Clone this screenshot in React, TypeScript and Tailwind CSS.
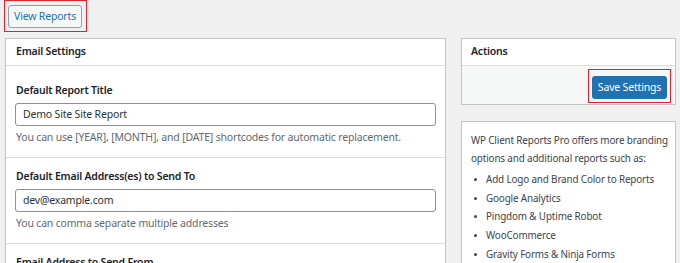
import React from 'react';

const font = { fontFamily: '"Noto Sans", "Open Sans", sans-serif' };

const Field: React.FC<{ label: string; value: string; help: string; first?: boolean }> = ({ label, value, help, first }) => (
    <div className={`px-[9px] pb-[12px] border-b border-[#dcdcde] ${first ? 'pt-[16px]' : 'pt-[10px]'}`}>
        <div className="h-[16px] leading-[16px] text-[10.5px] font-semibold tracking-[-0.2px] text-[#1d2327] pl-[1px]">{label}</div>
        <div className="mt-[5px] h-[23px] border border-[#8c8f94] rounded-[3px] bg-white flex items-center px-[7px] text-[10.5px] tracking-[-0.18px] text-[#2c3338]">
            {value}
        </div>
        <div className="mt-[3px] h-[16px] leading-[16px] text-[10.5px] tracking-[-0.18px] text-[#646970] pl-[1px] whitespace-nowrap">{help}</div>
    </div>
);

const features = [
    'Add Logo and Brand Color to Reports',
    'Google Analytics',
    'Pingdom & Uptime Robot',
    'WooCommerce',
    'Gravity Forms & Ninja Forms',
];

export default function App() {
    return (
        <div className="w-[680px] h-[263px] overflow-hidden bg-[#f0f0f1]" style={font}>
            <div className="pl-[4px]">
                <div className="inline-flex border border-[#e0242b] pl-[3px] pr-[4px] pt-[4px] pb-[3px]">
                    <button className="w-[74px] h-[23px] border border-[#7fa3c7] rounded-[3px] bg-[#f6f7f7] text-[10.5px] tracking-[-0.18px] text-[#2271b1]">
                        View Reports
                    </button>
                </div>
            </div>
            <div className="flex items-start pl-[5px] pr-[4px] mt-[6px] gap-[15px]">
                {/* main settings panel */}
                <div className="w-[441px] bg-white border border-[#c3c4c7]">
                    <div className="h-[27px] border-b border-[#dcdcde] flex items-center pl-[10px] text-[10.5px] font-semibold tracking-[-0.2px] text-[#1d2327]">
                        Email Settings
                    </div>
                    <Field
                        first
                        label="Default Report Title"
                        value="Demo Site Site Report"
                        help="You can use [YEAR], [MONTH], and [DATE] shortcodes for automatic replacement."
                    />
                    <Field
                        label="Default Email Address(es) to Send To"
                        value="dev@example.com"
                        help="You can comma separate multiple addresses"
                    />
                    <div className="px-[9px] pt-[10px]">
                        <div className="h-[16px] leading-[16px] text-[10.5px] font-semibold tracking-[-0.2px] text-[#1d2327] pl-[1px]">Email Address to Send From</div>
                    </div>
                </div>

                {/* sidebar */}
                <div className="flex-1 flex flex-col gap-[16px]">
                    <div className="bg-white border border-[#c3c4c7]">
                        <div className="h-[27px] flex items-center pl-[9px] text-[10.5px] font-semibold tracking-[-0.2px] text-[#1d2327] border-b border-[#dcdcde]">
                            Actions
                        </div>
                        <div className="bg-[#f6f7f7] h-[38px] flex justify-end items-start pr-[4px] pt-[3px]">
                            <div className="border border-[#e0242b] p-[3px]">
                                <button className="w-[75px] h-[23px] rounded-[3px] bg-[#2271b1] text-white text-[10.5px] tracking-[-0.18px]">
                                    Save Settings
                                </button>
                            </div>
                        </div>
                    </div>
                    <div className="bg-white border border-[#c3c4c7] pl-[9px] pr-[4px] pt-[10px] pb-[10px] text-[9.9px] tracking-[-0.15px] text-[#3c434a]">
                        <p className="leading-[17.5px]">WP Client Reports Pro offers more branding options and additional reports such as:</p>
                        <ul className="mt-[3px]">
                            {features.map(f => (
                                <li key={f} className="h-[18.7px] flex items-center whitespace-nowrap">
                                    <span className="w-[3px] h-[3px] rounded-full bg-[#3c434a] ml-[3px] mr-[9px] shrink-0" />
                                    {f}
                                </li>
                            ))}
                        </ul>
                    </div>
                </div>
            </div>
        </div>
    );
}
